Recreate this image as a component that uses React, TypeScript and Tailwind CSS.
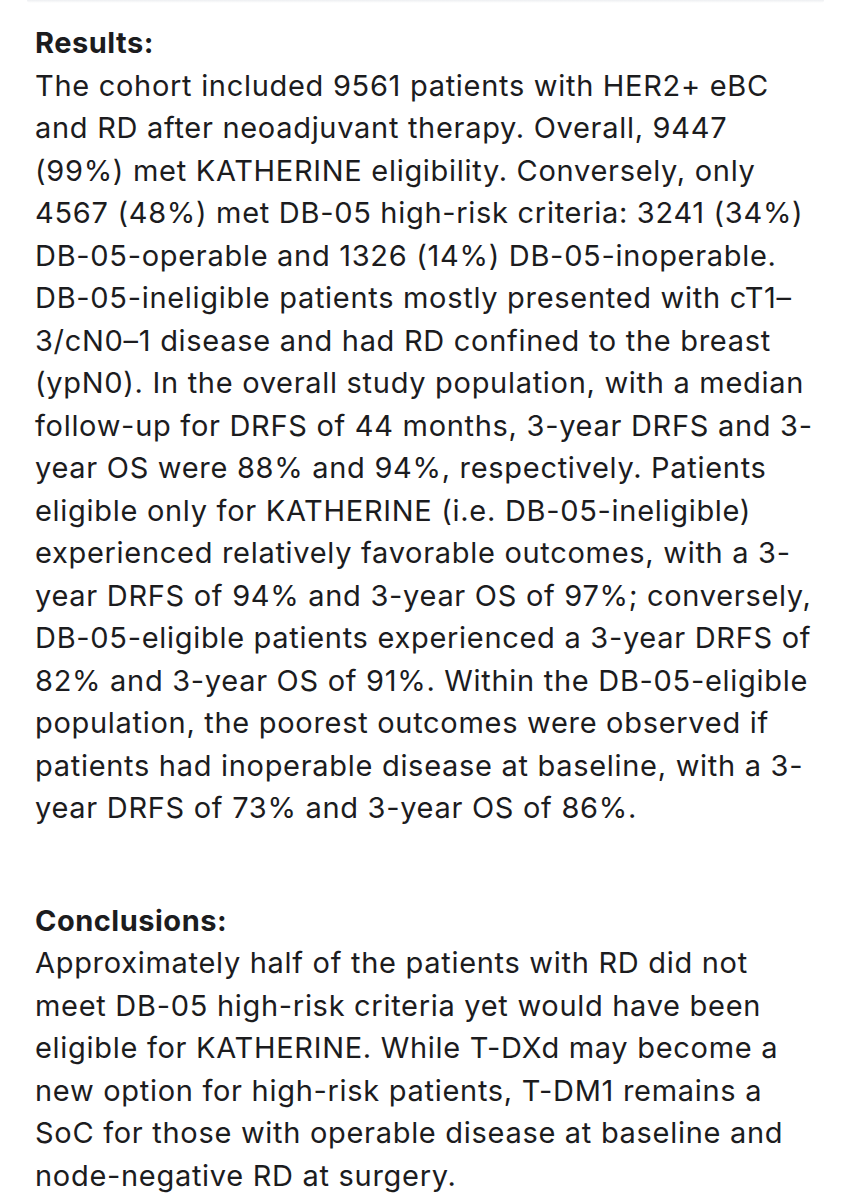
const results = [
  'The cohort included 9561 patients with HER2+ eBC',
  'and RD after neoadjuvant therapy. Overall, 9447',
  '(99%) met KATHERINE eligibility. Conversely, only',
  '4567 (48%) met DB-05 high-risk criteria: 3241 (34%)',
  'DB-05-operable and 1326 (14%) DB-05-inoperable.',
  'DB-05-ineligible patients mostly presented with cT1–',
  '3/cN0–1 disease and had RD confined to the breast',
  '(ypN0). In the overall study population, with a median',
  'follow-up for DRFS of 44 months, 3-year DRFS and 3-',
  'year OS were 88% and 94%, respectively. Patients',
  'eligible only for KATHERINE (i.e. DB-05-ineligible)',
  'experienced relatively favorable outcomes, with a 3-',
  'year DRFS of 94% and 3-year OS of 97%; conversely,',
  'DB-05-eligible patients experienced a 3-year DRFS of',
  '82% and 3-year OS of 91%. Within the DB-05-eligible',
  'population, the poorest outcomes were observed if',
  'patients had inoperable disease at baseline, with a 3-',
  'year DRFS of 73% and 3-year OS of 86%.',
]

const conclusions = [
  'Approximately half of the patients with RD did not',
  'meet DB-05 high-risk criteria yet would have been',
  'eligible for KATHERINE. While T-DXd may become a',
  'new option for high-risk patients, T-DM1 remains a',
  'SoC for those with operable disease at baseline and',
  'node-negative RD at surgery.',
]

function Section({ title, lines }: { title: string; lines: string[] }) {
  return (
    <section>
      <h2 className="font-bold tracking-[0.5px]">{title}</h2>
      {lines.map((line, i) => (
        <p key={i} className="whitespace-nowrap">
          {line}
        </p>
      ))}
    </section>
  )
}

export default function App() {
  return (
    <div className="w-[851px] h-[1200px] bg-white overflow-hidden">
      <div className="mx-[27px] h-[3px] rounded-b-md bg-gradient-to-b from-gray-200/70 to-white" />
      <div
        className="px-[35px] pt-[19px] text-[29px] leading-[42.5px] text-[#1c1c1e] tracking-[0.7px]"
        style={{ fontFamily: 'Inter, "Noto Sans", sans-serif' }}
      >
        <Section title="Results:" lines={results} />
        <div className="h-[70px]" />
        <Section title="Conclusions:" lines={conclusions} />
      </div>
    </div>
  )
}
